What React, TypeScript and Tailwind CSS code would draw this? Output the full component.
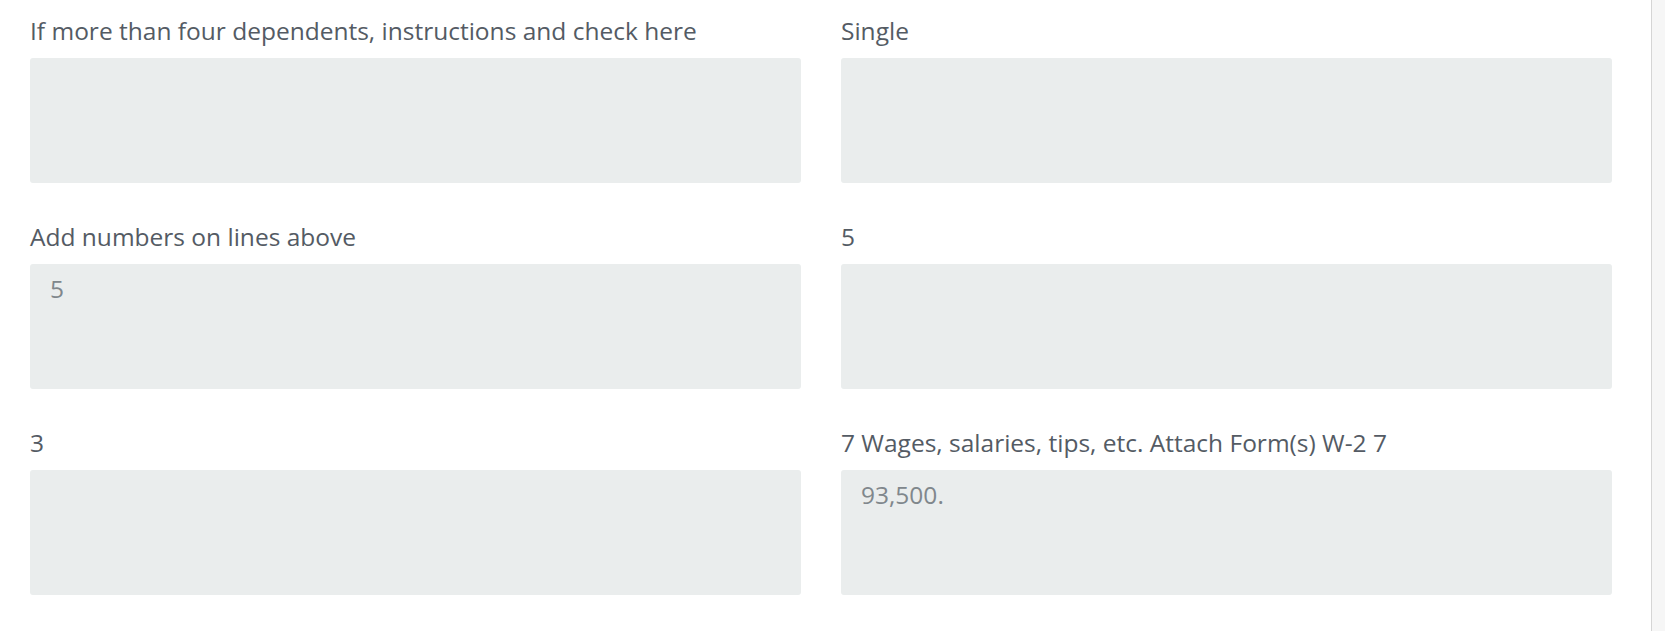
import React from "react";

const fields: { label: string; value?: string }[] = [
  { label: "If more than four dependents, instructions and check here" },
  { label: "Single" },
  { label: "Add numbers on lines above", value: "5" },
  { label: "5" },
  { label: "3" },
  { label: "7 Wages, salaries, tips, etc. Attach Form(s) W-2 7", value: "93,500." },
];

export default function App() {
  return (
    <div
      className="flex h-[631px] w-[1665px] overflow-hidden bg-white"
      style={{ fontFamily: '"Open Sans", "Noto Sans", sans-serif' }}
    >
      <div className="flex-1 pl-[30px] pr-[39px] pt-[16px]">
        <div className="grid grid-cols-2 gap-x-[40px] gap-y-[39px]">
          {fields.map((f, i) => (
            <div key={i} className="flex flex-col">
              <div className="h-[30px] whitespace-nowrap text-[24.5px] leading-[30px] text-[#545b64]">{f.label}</div>
              <div className="mt-[12px] h-[125px] rounded-[3px] bg-[#eaeded] px-[20px] pt-[10px] text-[24.5px] leading-[30px] text-[#80878c]">
                {f.value ?? ""}
              </div>
            </div>
          ))}
        </div>
      </div>
      <div className="w-[14px] border-l border-[#d5d5d5] bg-[#f6f6f6]" />
    </div>
  );
}
